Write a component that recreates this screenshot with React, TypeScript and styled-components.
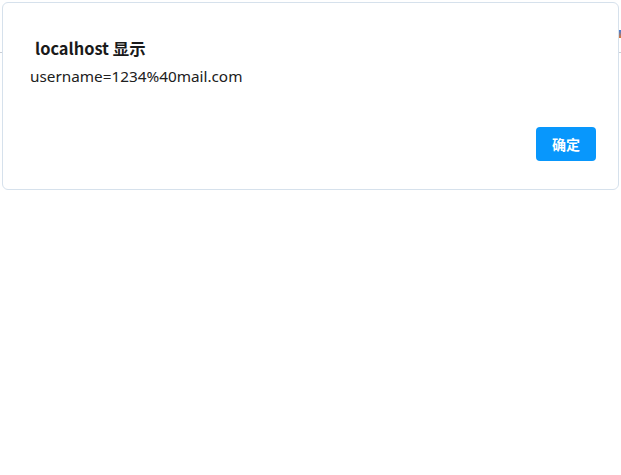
import React from "react";
import styled, { createGlobalStyle } from "styled-components";

const Global = createGlobalStyle`
  html, body { margin: 0; padding: 0; background: #ffffff; }
  body { font-family: "Noto Sans", "Noto Sans CJK SC", sans-serif; }
`;

const Page = styled.div`
  position: relative;
  width: 621px;
  height: 475px;
  overflow: hidden;
  background: #ffffff;
`;

const HeaderLine = styled.div`
  margin-top: 52px;
  height: 1px;
  background: #c9ced6;
`;

const Marker = styled.div`
  position: absolute;
  right: 0;
  top: 30px;
  width: 2px;
  height: 8px;
  background: linear-gradient(#3b7fe0, #e0762f);
`;

const Dialog = styled.div`
  position: absolute;
  left: 2px;
  top: 2px;
  width: 617px;
  height: 188px;
  box-sizing: border-box;
  background: #ffffff;
  border: 1px solid #d6e1ec;
  border-radius: 6px;
  padding: 33px 22px 0 27px;
  display: flex;
  flex-direction: column;
`;

const Title = styled.div`
  font-family: "Noto Sans CJK SC", "Noto Sans", sans-serif;
  font-weight: 700;
  font-size: 16.4px;
  line-height: 24px;
  color: #1a1a1a;
  padding-left: 5px;
`;

const Message = styled.div`
  font-family: "Noto Sans", "Noto Sans CJK SC", sans-serif;
  font-size: 15.3px;
  line-height: 20px;
  color: #202020;
  margin-top: 6px;
`;

const Footer = styled.div`
  display: flex;
  justify-content: flex-end;
  margin-top: 41px;
`;

const Button = styled.button`
  width: 60px;
  height: 34px;
  border: none;
  border-radius: 4px;
  background: #0897fc;
  color: #ffffff;
  font-family: "Noto Sans CJK SC", sans-serif;
  font-weight: 700;
  font-size: 14px;
  padding: 0;
  cursor: pointer;
`;

export default function App() {
  return (
    <Page>
      <Global />
      <HeaderLine />
      <Marker />
      <Dialog>
        <Title>localhost 显示</Title>
        <Message>username=1234%40mail.com</Message>
        <Footer>
          <Button>确定</Button>
        </Footer>
      </Dialog>
    </Page>
  );
}
